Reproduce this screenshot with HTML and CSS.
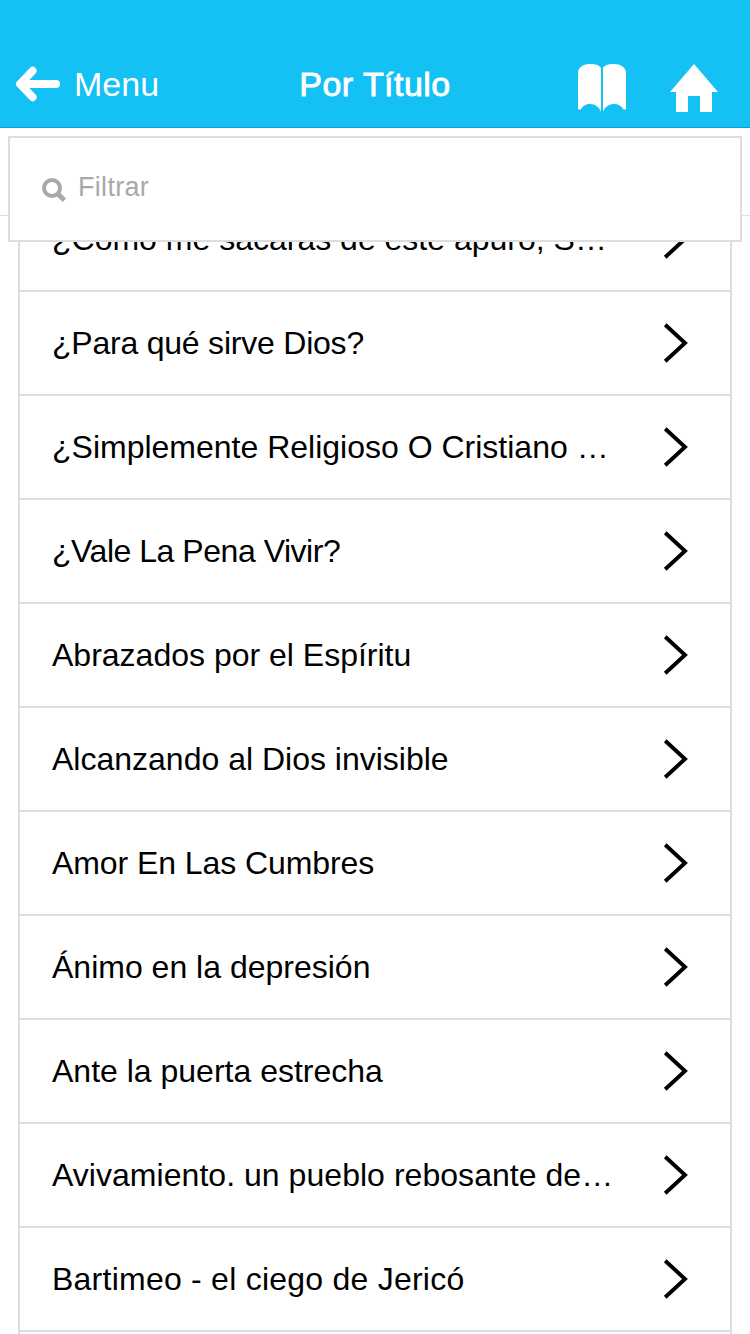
FILE: index.html
```html
<!DOCTYPE html>
<html lang="es">
<head>
<meta charset="utf-8">
<title>Por Título</title>
<link rel="stylesheet" href="styles.css">
</head>
<body>
<header class="navbar">
  <a class="back">
    <svg class="back-icon" width="46" height="36" viewBox="0 0 46 36"><path d="M17.700 4.700L5 18l12.700 13.300M6 18H41.200" fill="none" stroke="#fff" stroke-width="7.800" stroke-linecap="round" stroke-linejoin="round"/></svg>
    <span class="back-label">Menu</span>
  </a>
  <h1 class="title">Por Título</h1>
  <div class="actions">
    <svg width="48" height="48" viewBox="0 0 48 48" fill="#fff"><path d="M0 8C1 2.500 6 0 12.500 0C17.500 0 22 1.500 23 4V48C21.500 43 17 40 12 40C7.500 40 4.500 42 2.500 45.500H0Z"/><path d="M48 8C47 2.500 42 0 35.500 0C30.500 0 26 1.500 25 4V48C26.500 43 31 40 36 40C40.500 40 43.500 42 45.500 45.500H48Z"/></svg>
    <svg width="48" height="48" viewBox="0 0 48 48" fill="#fff"><path d="M24 0L48 28H42V48H30V32H18V48H6V28H0Z"/></svg>
  </div>
</header>
<div class="toolbar">
  <div class="filter">
    <svg class="filter-icon" width="24" height="24" viewBox="0 0 24 24" fill="none" stroke="#a9a9a9"><circle cx="10" cy="10" r="8" stroke-width="4"/><path d="M15.500 15.500L22.300 22.300" stroke-width="4.800"/></svg>
    <span class="filter-text">Filtrar</span>
  </div>
</div>
<ul class="list">
  <li class="row"><span class="label">¿Cómo me sacarás de este apuro, S…</span><svg class="chevron" viewBox="0 0 26 42"><path d="M3.200 2.800L23 21L3.200 39.200"/></svg></li>
  <li class="row"><span class="label snug">¿Para qué sirve Dios?</span><svg class="chevron" viewBox="0 0 26 42"><path d="M3.200 2.800L23 21L3.200 39.200"/></svg></li>
  <li class="row"><span class="label">¿Simplemente Religioso O Cristiano …</span><svg class="chevron" viewBox="0 0 26 42"><path d="M3.200 2.800L23 21L3.200 39.200"/></svg></li>
  <li class="row"><span class="label tight">¿Vale La Pena Vivir?</span><svg class="chevron" viewBox="0 0 26 42"><path d="M3.200 2.800L23 21L3.200 39.200"/></svg></li>
  <li class="row"><span class="label">Abrazados por el Espíritu</span><svg class="chevron" viewBox="0 0 26 42"><path d="M3.200 2.800L23 21L3.200 39.200"/></svg></li>
  <li class="row"><span class="label">Alcanzando al Dios invisible</span><svg class="chevron" viewBox="0 0 26 42"><path d="M3.200 2.800L23 21L3.200 39.200"/></svg></li>
  <li class="row"><span class="label close">Amor En Las Cumbres</span><svg class="chevron" viewBox="0 0 26 42"><path d="M3.200 2.800L23 21L3.200 39.200"/></svg></li>
  <li class="row"><span class="label">Ánimo en la depresión</span><svg class="chevron" viewBox="0 0 26 42"><path d="M3.200 2.800L23 21L3.200 39.200"/></svg></li>
  <li class="row"><span class="label">Ante la puerta estrecha</span><svg class="chevron" viewBox="0 0 26 42"><path d="M3.200 2.800L23 21L3.200 39.200"/></svg></li>
  <li class="row"><span class="label open">Avivamiento. un pueblo rebosante de…</span><svg class="chevron" viewBox="0 0 26 42"><path d="M3.200 2.800L23 21L3.200 39.200"/></svg></li>
  <li class="row"><span class="label wide">Bartimeo - el ciego de Jericó</span><svg class="chevron" viewBox="0 0 26 42"><path d="M3.200 2.800L23 21L3.200 39.200"/></svg></li>
</ul>
</body>
</html>
```
FILE: styles.css
```css
* { box-sizing: border-box; }
html, body { height: 100%; }
body {
  margin: 0;
  overflow: hidden;
  background: #fff;
  color: #000;
  font-family: "Liberation Sans", Arial, sans-serif;
}
svg { display: block; flex: none; }
.navbar {
  display: grid;
  grid-template-columns: 1fr auto 1fr;
  align-items: center;
  height: 128px;
  padding: 40px 32px 0;
  border-bottom: 1px solid #0d9fcd;
  background: #13c1f5;
  color: #fff;
}
.back { display: flex; align-items: center; margin-left: -17px; }
.back-icon { margin-top: 1px; }
.back-label {
  margin: 1px 0 0 13px;
  font-size: 34px;
  line-height: 40px;
}
.title {
  margin: 2px 0 1px;
  font-size: 34px;
  line-height: 40px;
  font-weight: 400;
  letter-spacing: 0.45px;
  -webkit-text-stroke: 0.9px #fff;
}
.actions { display: flex; justify-content: flex-end; gap: 44px; padding-top: 8px; }
.toolbar {
  position: relative;
  z-index: 1;
  height: 88px;
  padding: 8px;
  border-bottom: 1px solid #ddd;
}
.filter {
  display: flex;
  align-items: center;
  height: 106px;
  padding: 0 32px;
  border: 2px solid #ddd;
  background: #fff;
}
.filter-icon { margin-top: 1px; }
.filter-text {
  margin: -5px 0 0 12px;
  color: #a9a9a9;
  font-size: 27px;
  line-height: 32px;
  letter-spacing: 0.3px;
}
.list {
  margin: -30px 18px 0;
  padding: 0 0 20px;
  border: 2px solid #ddd;
  list-style: none;
}
.row {
  display: flex;
  align-items: center;
  justify-content: space-between;
  height: 104px;
  padding: 0 42px 0 32px;
  border-bottom: 2px solid #ddd;
}
.label { font-size: 32px; line-height: 40px; white-space: nowrap; }
.snug { letter-spacing: -0.22px; }
.tight { letter-spacing: -0.47px; }
.close { letter-spacing: -0.08px; }
.open { letter-spacing: 0.04px; }
.wide { letter-spacing: 0.24px; }
.chevron {
  width: 26px;
  height: 42px;
  fill: none;
  stroke: #000;
  stroke-width: 3.9;
}
```
